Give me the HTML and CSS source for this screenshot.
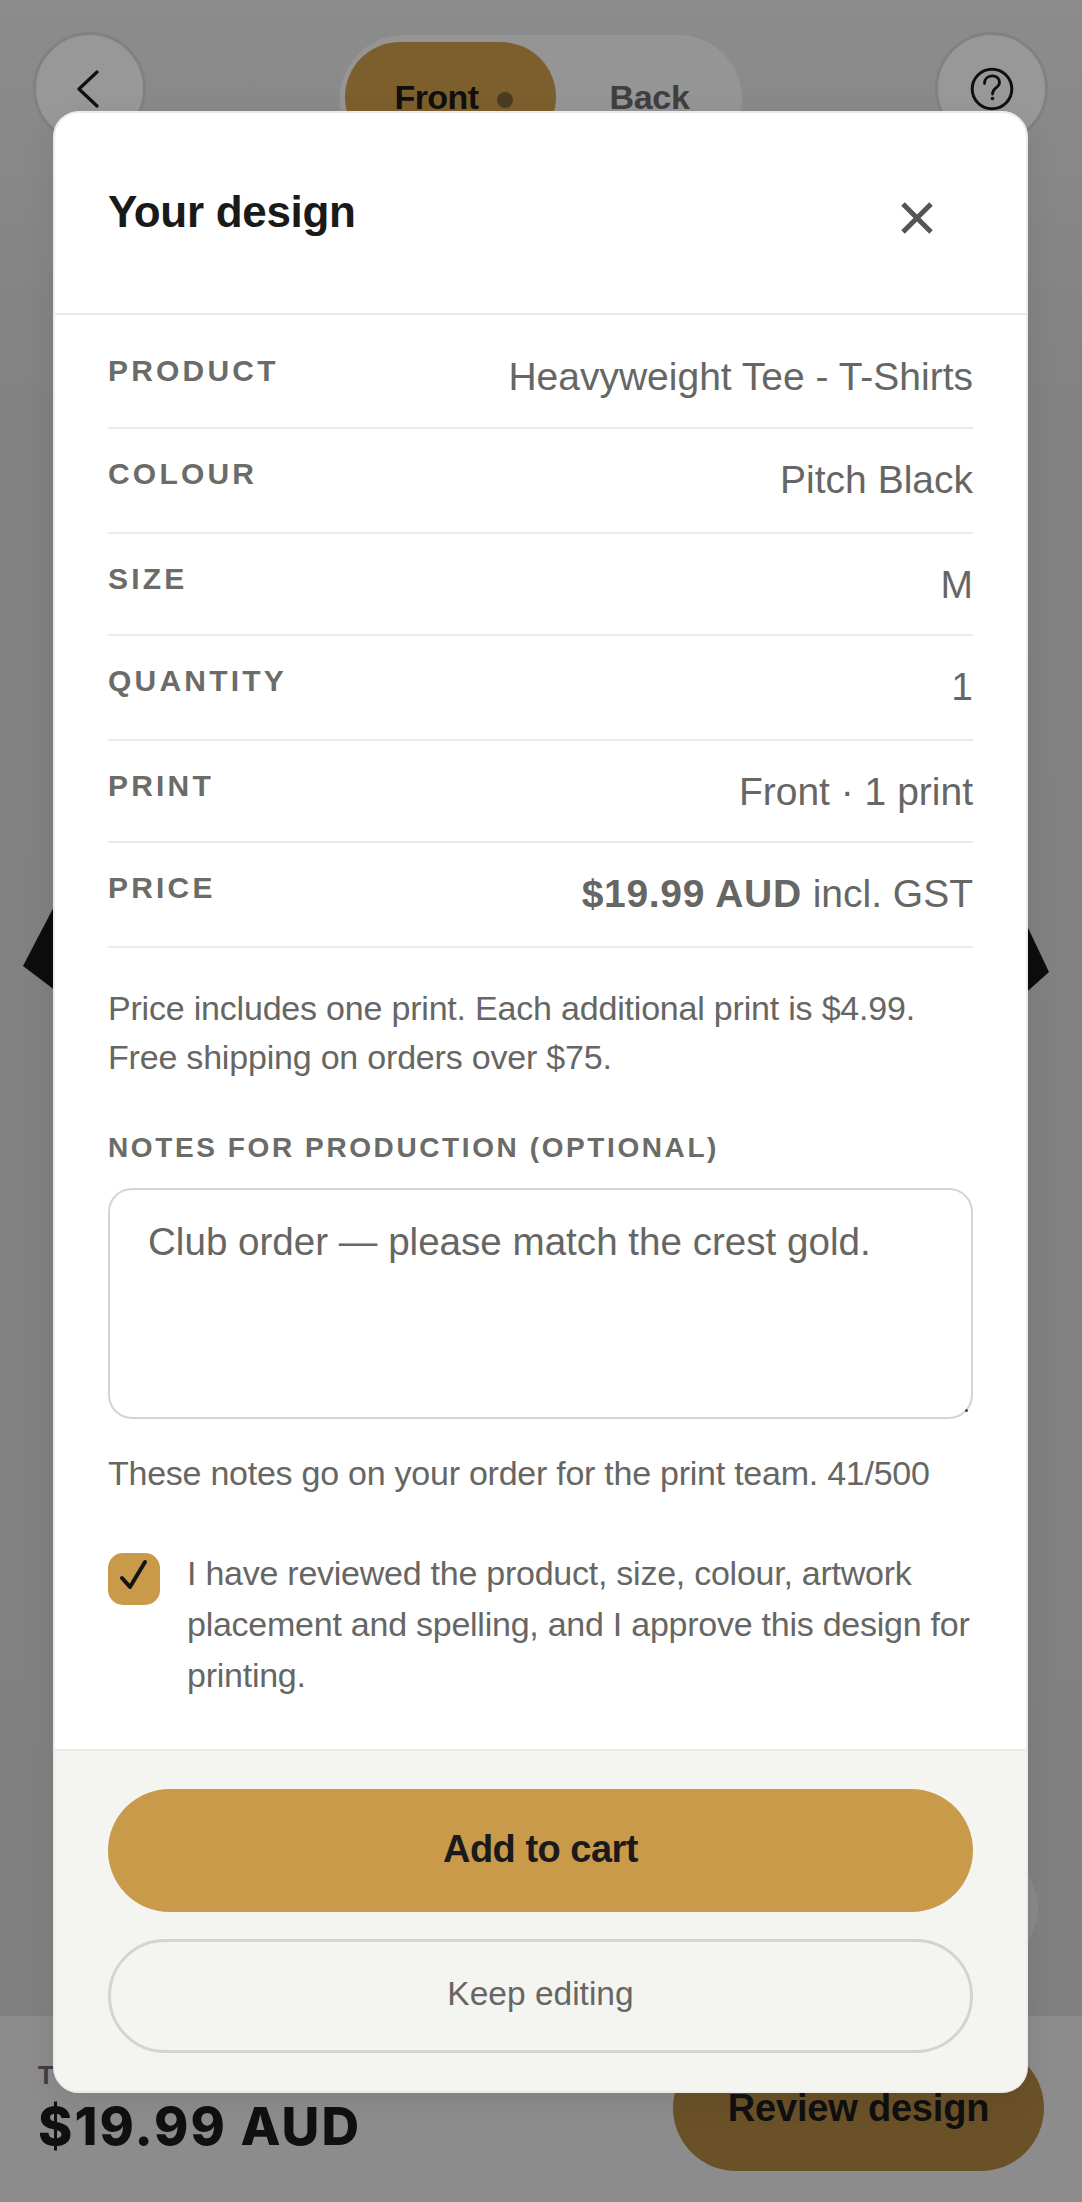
FILE: index.html
```html
<!DOCTYPE html>
<html lang="en">
<head>
<meta charset="utf-8">
<title>Your design</title>
<link rel="stylesheet" href="styles.css">
</head>
<body>
<div class="app">
  <header class="topbar">
    <button class="round" aria-label="Back">
      <svg class="chev" width="24" height="38" viewBox="0 0 24 38"><path d="M21 2 L3 19 L21 36" fill="none" stroke="#1a1a1a" stroke-width="3.2" stroke-linecap="round" stroke-linejoin="round"/></svg>
    </button>
    <div class="segment">
      <span class="seg seg-on">Front<i class="dot"></i></span>
      <span class="seg">Back</span>
    </div>
    <button class="round" aria-label="Help">
      <svg width="46" height="46" viewBox="0 0 46 46"><circle cx="23" cy="23" r="19.8" fill="none" stroke="#1a1a1a" stroke-width="3"/><path d="M15.5 17.5 C15.5 7.5 30.5 7.5 30.5 16.5 C30.5 22 23.5 21.5 23.5 28" fill="none" stroke="#1a1a1a" stroke-width="2.8" stroke-linecap="round"/><circle cx="23.5" cy="32.5" r="1.8" fill="#1a1a1a"/></svg>
    </button>
  </header>
  <main class="canvas">
    <svg class="shirt" width="1082" height="120" viewBox="0 885 1082 120"><polygon points="60,895 23,966 60,994 1020,998 1049,972 1020,911" fill="#161616"/></svg>
    <span class="fab"></span>
  </main>
  <footer class="bar">
    <div class="totals">
      <div class="total-label">TOTAL</div>
      <div class="total-price">$19.99 AUD</div>
    </div>
    <button class="review">Review design</button>
  </footer>
</div>

<div class="overlay">
  <section class="modal">
    <div class="modal-head">
      <h2 class="title">Your design</h2>
      <button class="close" aria-label="Close">
        <svg width="34" height="32" viewBox="0 0 34 32"><path d="M3 2 L31 30 M31 2 L3 30" fill="none" stroke="#555" stroke-width="5"/></svg>
      </button>
    </div>
    <div class="modal-body">
      <dl class="rows">
        <div class="row"><dt>PRODUCT</dt><dd>Heavyweight Tee - T-Shirts</dd></div>
        <div class="row"><dt>COLOUR</dt><dd>Pitch Black</dd></div>
        <div class="row"><dt>SIZE</dt><dd>M</dd></div>
        <div class="row"><dt>QUANTITY</dt><dd>1</dd></div>
        <div class="row"><dt>PRINT</dt><dd>Front · 1 print</dd></div>
        <div class="row"><dt>PRICE</dt><dd><b>$19.99 AUD</b> incl. GST</dd></div>
      </dl>
      <p class="note">Price includes one print. Each additional print is $4.99.<br>Free shipping on orders over $75.</p>
      <label class="notes-label" for="notes">NOTES FOR PRODUCTION (OPTIONAL)</label>
      <div class="notes-wrap">
        <textarea class="notes" id="notes">Club order — please match the crest gold.</textarea>
      </div>
      <p class="helper">These notes go on your order for the print team. 41/500</p>
      <div class="consent">
        <span class="check"><svg class="tick" width="30" height="34" viewBox="0 0 30 34"><path d="M3 19 L11 28 L26 3" fill="none" stroke="#141414" stroke-width="4" stroke-linecap="round" stroke-linejoin="round"/></svg></span>
        <p class="consent-text">I have reviewed the product, size, colour, artwork placement and spelling, and I approve this design for printing.</p>
      </div>
    </div>
    <div class="modal-foot">
      <button class="primary">Add to cart</button>
      <button class="secondary">Keep editing</button>
    </div>
  </section>
</div>
</body>
</html>
```

FILE: styles.css
```css
* { box-sizing: border-box; }
html, body { margin: 0; padding: 0; }
body {
  width: 1082px;
  height: 2202px;
  overflow: hidden;
  position: relative;
  font-family: "Liberation Sans", Arial, sans-serif;
  color: #1a1a1a;
  background: #ffffff;
}
button { font-family: inherit; padding: 0; border: 0; background: none; color: inherit; }

.app {
  width: 1082px;
  height: 2202px;
  display: flex;
  flex-direction: column;
  background: linear-gradient(180deg, #e2e2e2 0, #d2d2d2 400px, #cfcfcf 100%);
}
.topbar {
  height: 176px;
  flex: none;
  padding: 32px 34px 0 33px;
  display: flex;
  justify-content: space-between;
  align-items: flex-start;
}
.round {
  width: 113px;
  height: 113px;
  border-radius: 50%;
  border: 3px solid #d0d0d0;
  background: #f5f5f5;
  display: flex;
  align-items: center;
  justify-content: center;
}
.chev { margin-right: 4px; }
.segment {
  width: 408px;
  height: 134px;
  border-radius: 67px;
  border: 3px solid #e0e0e0;
  background: #f0f0f0;
  padding: 7px 5px;
  display: flex;
  align-items: flex-start;
}
.seg {
  flex: none;
  height: 110px;
  width: 180px;
  display: flex;
  align-items: center;
  justify-content: center;
  padding-top: 1px;
  font-size: 34px;
  font-weight: 700;
  letter-spacing: -0.3px;
  color: #666;
  margin-left: 4px;
}
.seg-on {
  width: 211px;
  margin-left: 0;
  border-radius: 56px;
  background: #c89a4a;
  color: #1a1a1a;
  padding-left: 8px;
  letter-spacing: -0.6px;
}
.dot {
  width: 16px;
  height: 16px;
  border-radius: 50%;
  background: #77603a;
  margin-left: 19px;
  margin-top: 4px;
}

.canvas { flex: 1; position: relative; }
.shirt { position: absolute; left: 0; top: 709px; }
.fab {
  position: absolute;
  left: 926px;
  top: 1676px;
  width: 112px;
  height: 112px;
  border-radius: 50%;
  background: #dedede;
}

.bar {
  height: 186px;
  flex: none;
  background: #e3e3e3;
  padding: 29px 38px 0 38px;
  display: flex;
  justify-content: space-between;
  align-items: flex-start;
}
.total-label {
  margin-top: 14px;
  font-size: 26px;
  line-height: 32px;
  letter-spacing: 2px;
  font-weight: 700;
  color: #666;
}
.total-price {
  margin-top: 6px;
  font-family: Inter, "Liberation Sans", sans-serif;
  font-size: 52px;
  line-height: 60px;
  font-weight: 800;
  letter-spacing: 2.1px;
  color: #1a1a1a;
}
.review {
  width: 371px;
  height: 126px;
  border-radius: 63px;
  background: #ad8442;
  font-size: 38px;
  font-weight: 700;
  letter-spacing: -0.2px;
  color: #1a1a1a;
}

.overlay {
  position: absolute;
  inset: 0;
  background: rgba(0, 0, 0, 0.38);
  padding: 111px 0 0 53px;
}
.modal {
  width: 975px;
  height: 1982px;
  background: #ffffff;
  border: 2px solid #ebebe8;
  border-radius: 26px;
  overflow: hidden;
  display: flex;
  flex-direction: column;
  box-shadow: 0 8px 30px rgba(0, 0, 0, 0.08);
}
.modal-head {
  flex: none;
  height: 202px;
  padding: 71px 81px 0 53px;
  border-bottom: 2px solid #ebebe8;
  display: flex;
  justify-content: space-between;
  align-items: flex-start;
}
.title {
  margin: 0;
  font-size: 44px;
  line-height: 56px;
  font-weight: 700;
  letter-spacing: -0.3px;
  color: #1a1a1a;
}
.close {
  width: 57px;
  height: 57px;
  margin-top: 5px;
  display: flex;
  align-items: center;
  justify-content: center;
}
.modal-body { flex: 1; padding: 11px 53px 0; min-height: 0; }

.rows { margin: 0; }
.row {
  display: flex;
  justify-content: space-between;
  align-items: flex-start;
  height: 102px;
  padding-top: 27px;
  border-bottom: 2px solid #ebebe8;
}
.row:nth-child(even) { height: 105px; }
.row:first-child { height: 103px; }
.row dt {
  font-size: 30px;
  line-height: 36px;
  font-weight: 700;
  letter-spacing: 3.2px;
  color: #6b6b68;
}
.row dd {
  margin: 0;
  font-size: 39px;
  line-height: 48px;
  color: #666664;
}
.row dd b { letter-spacing: 0.7px; color: #666664; }

.note {
  margin: 36px 0 0;
  font-size: 34px;
  line-height: 49px;
  letter-spacing: -0.2px;
  color: #666664;
}
.notes-label {
  display: block;
  margin-top: 49px;
  font-size: 28px;
  line-height: 34px;
  font-weight: 700;
  letter-spacing: 2.6px;
  color: #6b6b68;
}
.notes-wrap {
  position: relative;
  margin-top: 23px;
}
.notes-wrap::after {
  content: "";
  position: absolute;
  right: 5px;
  bottom: 7px;
  width: 3px;
  height: 3px;
  border-radius: 50%;
  background: #444;
}
.notes {
  display: block;
  width: 865px;
  height: 231px;
  padding: 29px 38px;
  border: 2px solid #d4d4d1;
  border-radius: 24px;
  background: #fff;
  outline: 0;
  resize: none;
  font-family: inherit;
  font-size: 38.6px;
  line-height: 46px;
  color: #666664;
}
.helper {
  margin: 30px 0 0;
  font-size: 34px;
  line-height: 49px;
  letter-spacing: -0.25px;
  color: #666664;
}
.consent {
  margin-top: 50px;
  display: flex;
  gap: 27px;
  align-items: flex-start;
}
.check {
  flex: none;
  width: 52px;
  height: 52px;
  margin-top: 5px;
  border-radius: 15px;
  background: #c89a4a;
  display: flex;
  align-items: center;
  justify-content: center;
}
.tick { margin-bottom: 7px; }
.consent-text {
  margin: 0;
  font-size: 34px;
  line-height: 51px;
  letter-spacing: -0.25px;
  color: #666664;
}

.modal-foot {
  flex: none;
  background: #f4f4f1;
  border-top: 2px solid #ebebe8;
  padding: 38px 53px;
  display: flex;
  flex-direction: column;
  gap: 27px;
}
.primary {
  height: 123px;
  border-radius: 62px;
  background: #c89a4a;
  padding-bottom: 2px;
  font-size: 38px;
  font-weight: 700;
  letter-spacing: -0.5px;
  color: #1a1a1a;
}
.secondary {
  height: 114px;
  border-radius: 57px;
  border: 3px solid #d4d4d1;
  padding-bottom: 4px;
  font-size: 33.5px;
  color: #666664;
}
```
